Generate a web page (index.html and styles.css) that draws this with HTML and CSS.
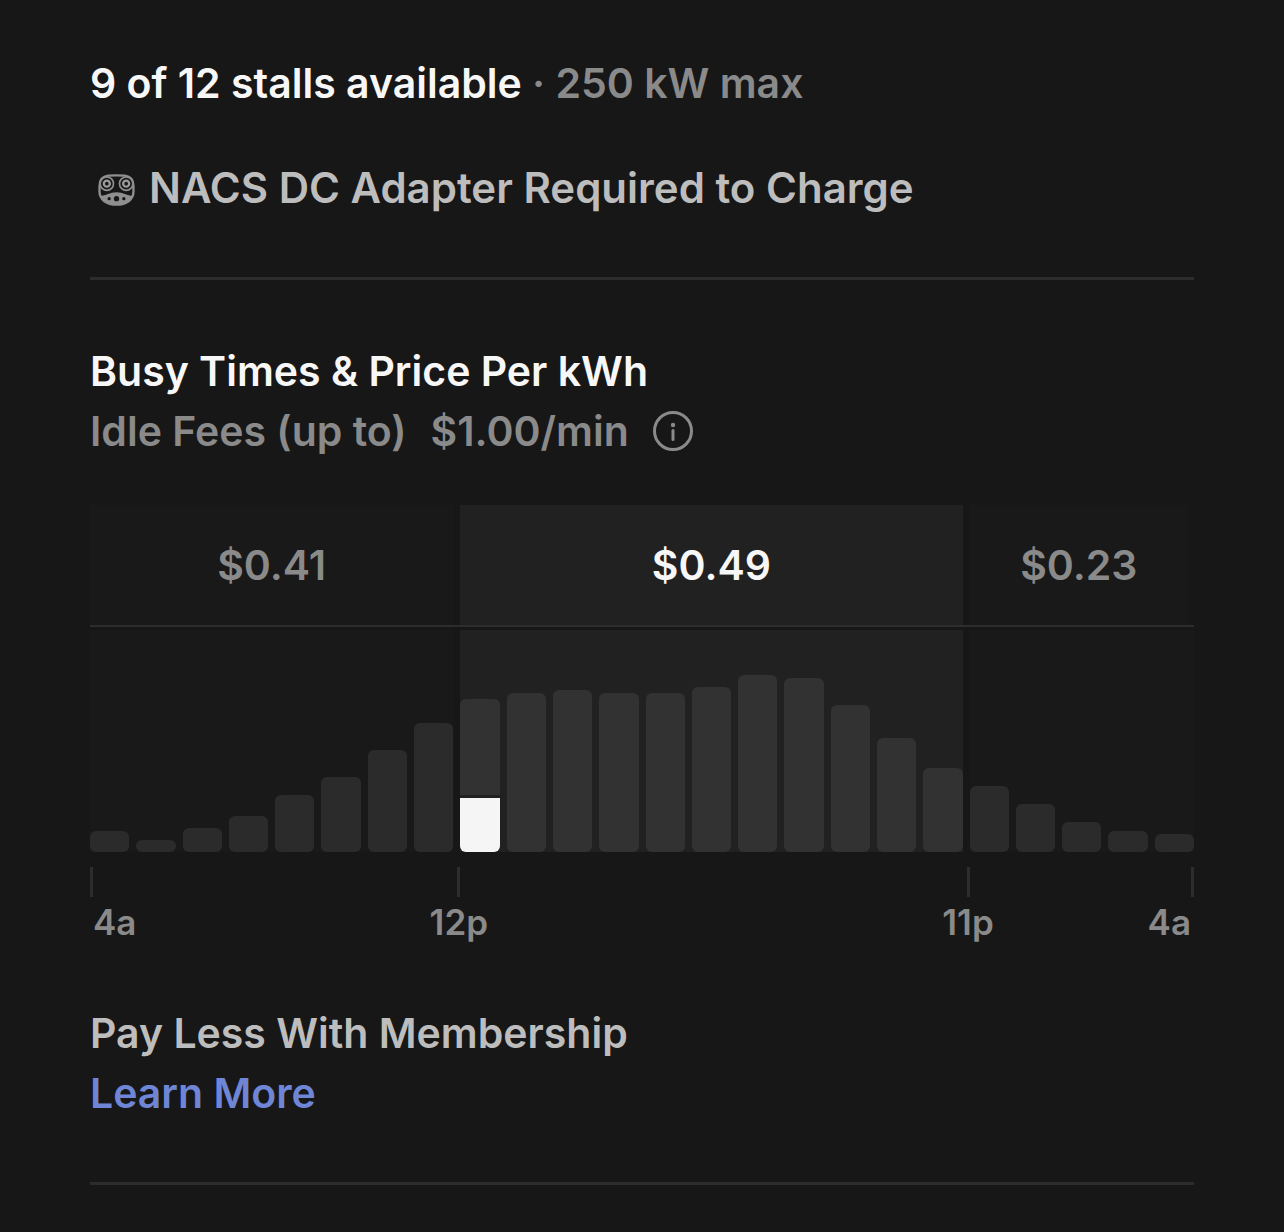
FILE: index.html
```html
<!DOCTYPE html>
<html lang="en">
<head>
    <meta charset="UTF-8">
    <meta name="viewport" content="width=device-width, initial-scale=1.0">
    <title>Charging Station</title>
    <link rel="stylesheet" href="styles.css">
</head>
<body>
    <main class="station">
        <section class="availability">
            <h1 class="stalls">9 of 12 stalls available <span class="power">· 250 kW max</span></h1>
            <p class="adapter">
                <svg class="adapter-icon" viewBox="0 0 110 96" aria-hidden="true">
                    <path class="adapter-shell" d="M30 5 Q55 3 80 5 C96 7 106 18 106 36 V52 C106 78 84 92 55 92 C26 92 4 78 4 52 V36 C4 18 14 7 30 5 Z"/>
                    <path class="adapter-fill" d="M5 66 C24 66 34 55 55 55 C76 55 86 66 105 66 C98 84 80 92 55 92 C30 92 12 84 5 66 Z"/>
                    <circle class="adapter-ring" cx="26" cy="29" r="20"/>
                    <circle class="adapter-ring" cx="84" cy="29" r="20"/>
                    <circle class="adapter-pin" cx="26" cy="29" r="9"/>
                    <circle class="adapter-pin" cx="84" cy="29" r="9"/>
                    <circle class="adapter-hole" cx="55" cy="74" r="8"/>
                    <circle class="adapter-hole" cx="33" cy="74" r="5"/>
                    <circle class="adapter-hole" cx="77" cy="74" r="5"/>
                </svg>
                NACS DC Adapter Required to Charge
            </p>
        </section>

        <section class="pricing">
            <h2 class="pricing-title">Busy Times &amp; Price Per kWh</h2>
            <div class="idle-fees">
                <span>Idle Fees (up to)</span>
                <span>$1.00/min</span>
                <button class="info-btn" type="button" aria-label="About idle fees">
                    <svg viewBox="0 0 40 40" aria-hidden="true">
                        <circle class="info-ring" cx="20" cy="20" r="18.5"/>
                        <circle class="info-dot" cx="20" cy="14" r="2.2"/>
                        <path class="info-stem" d="M20 19.5 V28.5"/>
                    </svg>
                </button>
            </div>

            <div class="chart">
                <div class="price price-morning">$0.41</div>
                <div class="price price-day current">$0.49</div>
                <div class="price price-night">$0.23</div>

                <div class="divider"></div>

                <div class="bars bars-morning">
                    <div class="bar" style="height: 21px"></div>
                    <div class="bar" style="height: 12px"></div>
                    <div class="bar" style="height: 24px"></div>
                    <div class="bar" style="height: 36px"></div>
                    <div class="bar" style="height: 57px"></div>
                    <div class="bar" style="height: 75px"></div>
                    <div class="bar" style="height: 102px"></div>
                    <div class="bar" style="height: 129px"></div>
                </div>
                <div class="bars bars-day current">
                    <div class="bar now" style="height: 153px"><div class="live" style="height: 54px"></div></div>
                    <div class="bar" style="height: 159px"></div>
                    <div class="bar" style="height: 162px"></div>
                    <div class="bar" style="height: 159px"></div>
                    <div class="bar" style="height: 159px"></div>
                    <div class="bar" style="height: 165px"></div>
                    <div class="bar" style="height: 177px"></div>
                    <div class="bar" style="height: 174px"></div>
                    <div class="bar" style="height: 147px"></div>
                    <div class="bar" style="height: 114px"></div>
                    <div class="bar" style="height: 84px"></div>
                </div>
                <div class="bars bars-night">
                    <div class="bar" style="height: 66px"></div>
                    <div class="bar" style="height: 48px"></div>
                    <div class="bar" style="height: 30px"></div>
                    <div class="bar" style="height: 21px"></div>
                    <div class="bar" style="height: 18px"></div>
                </div>

                <div class="tick tick-start"><span class="hour">4a</span></div>
                <div class="tick tick-noon"><span class="hour">12p</span></div>
                <div class="tick tick-late"><span class="hour">11p</span></div>
                <div class="tick tick-end"><span class="hour">4a</span></div>
            </div>

            <h3 class="membership">Pay Less With Membership</h3>
            <a class="learn-more" href="#">Learn More</a>
        </section>
    </main>
</body>
</html>
```
FILE: styles.css
```css
body {
    margin: 0;
    background-color: #171717;
    color: #8a8a8a;
    font-family: Inter, "Liberation Sans", sans-serif;
    font-size: 41px;
    font-weight: 600;
    line-height: 60px;
}
h1, h2, h3, p {
    margin: 0;
    font-size: inherit;
    font-weight: inherit;
}
.station {
    padding: 0 90px;
}
.availability {
    display: flex;
    flex-direction: column;
    gap: 45px;
    padding: 53px 0 59px;
    border-bottom: 3px solid #2c2c2c;
}
.stalls {
    color: #f7f7f7;
}
.power {
    color: #8a8a8a;
}
.adapter {
    display: flex;
    align-items: center;
    gap: 14px;
    padding-left: 8px;
    color: #bdbdbd;
    font-size: 42px;
}
.adapter-icon {
    width: 37px;
    height: 32px;
    margin-top: 3px;
}
.adapter-shell {
    fill: #171717;
    stroke: #8f8f8f;
    stroke-width: 7;
}
.adapter-fill {
    fill: #8f8f8f;
}
.adapter-ring {
    fill: #171717;
    stroke: #8f8f8f;
    stroke-width: 5;
}
.adapter-pin {
    fill: none;
    stroke: #9c9c9c;
    stroke-width: 7;
}
.adapter-hole {
    fill: #171717;
}
.pricing {
    padding: 61px 0 59px;
    border-bottom: 3px solid #2c2c2c;
}
.pricing-title {
    color: #f7f7f7;
}
.idle-fees {
    display: flex;
    align-items: center;
    gap: 24px;
}
.info-btn {
    width: 40px;
    height: 40px;
    padding: 0;
    border: none;
    background: none;
    cursor: pointer;
}
.info-btn svg {
    display: block;
}
.info-ring {
    fill: none;
    stroke: #8a8a8a;
    stroke-width: 3;
}
.info-dot {
    fill: #8a8a8a;
}
.info-stem {
    stroke: #8a8a8a;
    stroke-width: 3;
    stroke-linecap: round;
}
/* one column per hour, shared by prices, bars and axis */
.chart {
    display: grid;
    grid-template-columns: repeat(24, 1fr);
    column-gap: 7px;
    margin-top: 44px;
}
.price {
    height: 120px;
    line-height: 120px;
    text-align: center;
    background-color: #191919;
}
.price-morning, .bars-morning {
    grid-column: 1 / 9;
}
.price-day, .bars-day {
    grid-column: 9 / 20;
}
.price-night, .bars-night {
    grid-column: 20 / 25;
}
.price-night {
    margin-right: 6px;
}
.price.current {
    background-color: #212121;
    color: #f7f7f7;
}
.divider {
    grid-column: 1 / -1;
    height: 2px;
    margin-bottom: 3px;
    background-color: #2d2d2d;
}
.bars {
    display: grid;
    grid-template-columns: subgrid;
    align-items: end;
    height: 222px;
    background-color: #191919;
}
.bar {
    border-radius: 6px;
    background-color: #2b2b2b;
}
.bars.current {
    background-color: #212121;
}
.bars.current .bar {
    background-color: #323232;
}
.now {
    display: flex;
    flex-direction: column;
    justify-content: flex-end;
    overflow: hidden;
}
.live {
    border-top: 3px solid #212121;
    background-color: #f5f5f5;
}
.tick {
    display: flex;
    flex-direction: column;
    align-items: center;
    width: 3px;
    margin-top: 15px;
    font-size: 35px;
    line-height: 50px;
}
.tick::before {
    content: "";
    width: 3px;
    height: 30px;
    flex: none;
    background-color: #2d2d2d;
}
.tick-start {
    grid-column: 1;
    align-items: flex-start;
}
.tick-noon {
    grid-column: 9;
    margin-left: -3px;
}
.tick-late {
    grid-column: 20;
    margin-left: -3px;
}
.tick-end {
    grid-column: 24;
    justify-self: end;
    align-items: flex-end;
}
.tick-start .hour, .tick-end .hour {
    padding: 0 3px;
}
.membership {
    margin-top: 56px;
    color: #bdbdbd;
}
.learn-more {
    display: block;
    color: #6f86d6;
    text-decoration: none;
}
.learn-more:hover {
    text-decoration: underline;
}
```
